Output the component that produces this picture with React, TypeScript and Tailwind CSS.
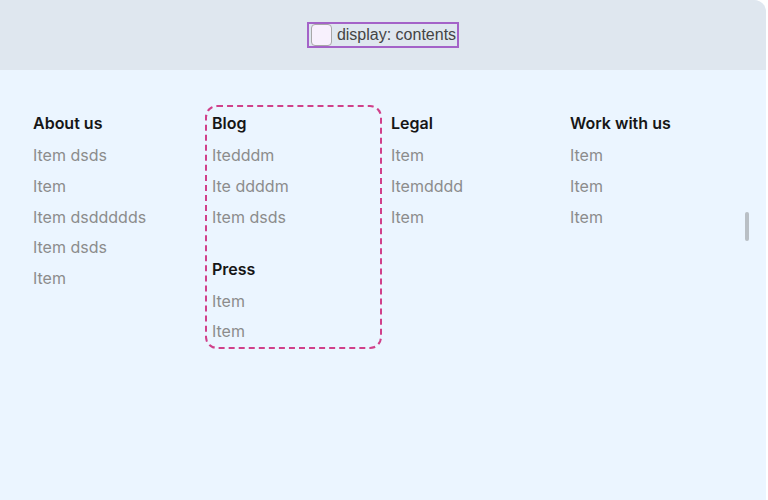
import React from "react";

const font = { fontFamily: "Inter, 'Noto Sans', sans-serif" };

function Group({ title, items }: { title: string; items: string[] }) {
  return (
    <div className="flex flex-col gap-[8.75px]">
      <div className="text-[16px] leading-[22px] font-semibold text-[#161616] mb-[1.25px]">{title}</div>
      {items.map((it, i) => (
        <div key={i} className="text-[16px] leading-[22px] text-[#8c8c8c]">
          {it}
        </div>
      ))}
    </div>
  );
}

export default function App() {
  return (
    <div className="w-[768px] h-[500px] bg-white overflow-hidden" style={font}>
      <div className="relative w-[766px] h-[500px] rounded-tr-[12px] bg-[#ebf5ff] overflow-hidden">
        <div className="h-[70px] bg-[#dfe7ef] flex items-center justify-center">
          <label className="flex items-center gap-[5px] h-[26px] pl-[2px] pr-[1px] border-2 border-[#a463c8]">
            <span className="w-[21px] h-[22px] rounded-[4px] border border-[#a8a8a8] bg-[#f8f1fd]" />
            <span
              className="text-[16px] leading-[20px] text-[#444]"
              style={{ fontFamily: "'Liberation Sans', Arial, sans-serif" }}
            >
              display: contents
            </span>
          </label>
        </div>
        <div className="grid grid-cols-[163px_163px_163px_163px] gap-x-[16px] pl-[33px] pt-[42px]">
          <div>
            <Group title="About us" items={["Item dsds", "Item", "Item dsddddds", "Item dsds", "Item"]} />
          </div>
          <div className="flex flex-col gap-[30px] self-start outline-2 outline-dashed outline-[#d0408a] outline-offset-[5px] rounded-[5px]">
            <Group title="Blog" items={["Itedddm", "Ite ddddm", "Item dsds"]} />
            <Group title="Press" items={["Item", "Item"]} />
          </div>
          <div>
            <Group title="Legal" items={["Item", "Itemdddd", "Item"]} />
          </div>
          <div>
            <Group title="Work with us" items={["Item", "Item", "Item"]} />
          </div>
        </div>
        <div className="absolute left-[745px] top-[212px] w-[4px] h-[29px] rounded-full bg-[#b9bfc5]" />
      </div>
    </div>
  );
}
